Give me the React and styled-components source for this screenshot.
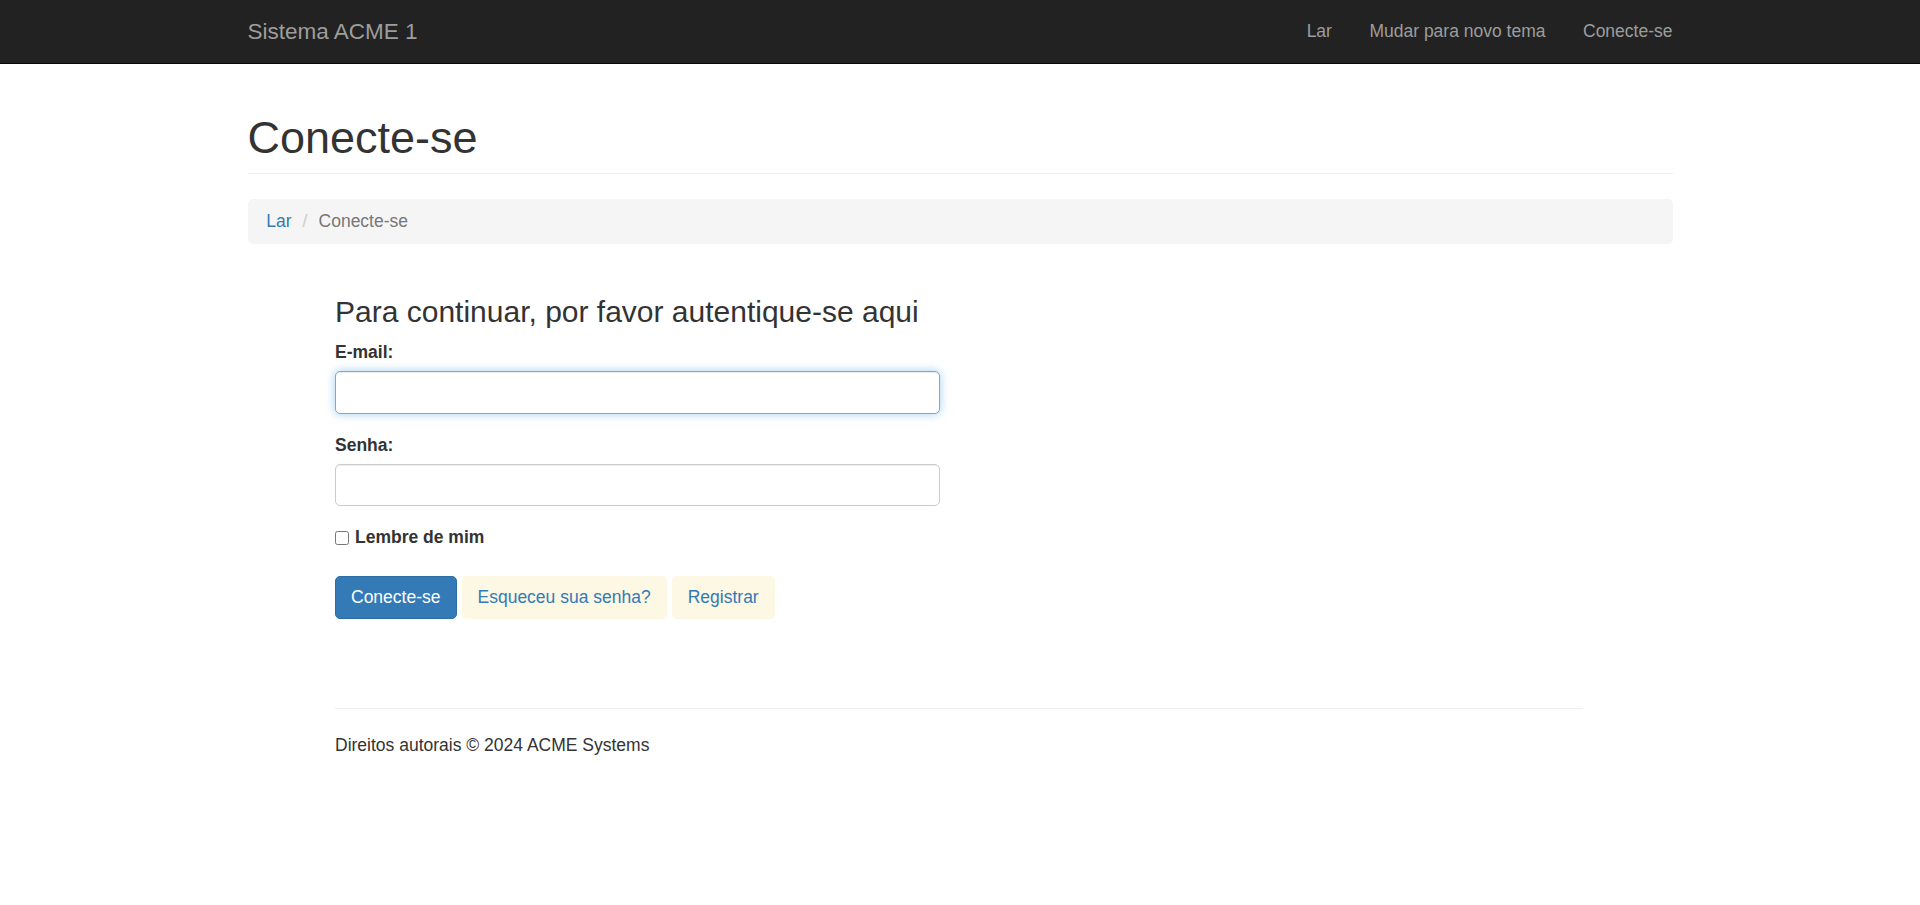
import React from 'react';
import styled, { createGlobalStyle } from 'styled-components';

// page is a bootstrap 3 layout seen at 125% scale, so the sizes below are bootstrap's x1.25
const GlobalStyle = createGlobalStyle`
  html, body {
    margin: 0;
    padding: 0;
    background: #fff;
  }
  body {
    font-family: "Liberation Sans", Arial, Helvetica, sans-serif;
    font-size: 17.5px;
    line-height: 1.42857;
    color: #333;
  }
  * {
    box-sizing: border-box;
  }
`;

const Navbar = styled.nav`
  background: #222;
  border-bottom: 1px solid #080808;
`;

const Container = styled.div`
  width: 1425px;
  margin: 0 auto;
`;

const NavInner = styled(Container)`
  display: flex;
  align-items: center;
  justify-content: space-between;
  height: 62.5px;
`;

const Brand = styled.a`
  font-size: 22.5px;
  line-height: 25px;
  color: #9d9d9d;
  text-decoration: none;
`;

const NavList = styled.ul`
  display: flex;
  list-style: none;
  margin: 0 -18.75px 0 0;
  padding: 0;
`;

const NavLink = styled.a`
  display: block;
  padding: 18.75px;
  line-height: 25px;
  color: #9d9d9d;
  text-decoration: none;
`;

const PageHeader = styled.div`
  margin-top: 49px;
  padding-bottom: 11px;
  border-bottom: 1px solid #eee;

  h1 {
    margin: 0;
    font-size: 45px;
    font-weight: 500;
    line-height: 1.1;
  }
`;

const Breadcrumb = styled.ol`
  display: flex;
  list-style: none;
  margin: 25px 0 0;
  padding: 10px 18.75px;
  line-height: 25px;
  background: #f5f5f5;
  border-radius: 5px;
`;

const Crumb = styled.li`
  color: ${(p) => (p.active ? '#777' : '#337ab7')};

  &:not(:first-child)::before {
    content: '/\\00a0';
    padding: 0 6.25px 0 11px;
    color: #ccc;
  }
`;

const Content = styled.div`
  margin-left: 87.5px;
  width: 1248px;
`;

const FormTitle = styled.h3`
  margin: 51px 0 12px;
  font-size: 30px;
  font-weight: 500;
  line-height: 1.1;
`;

const FormGroup = styled.div`
  margin-bottom: 18.75px;
`;

const Label = styled.label`
  display: block;
  font-weight: 700;
  margin-bottom: 6.25px;
  line-height: 25px;
`;

const Input = styled.input`
  display: block;
  width: 605px;
  height: 42.5px;
  padding: 7.5px 15px;
  font: inherit;
  color: #555;
  background: #fff;
  border: 1px solid ${(p) => (p.focused ? '#66afe9' : '#ccc')};
  border-radius: 5px;
  outline: none;
  box-shadow: ${(p) =>
    p.focused
      ? 'inset 0 1px 1px rgba(0,0,0,.075), 0 0 10px rgba(102,175,233,.6)'
      : 'inset 0 1px 1px rgba(0,0,0,.075)'};
`;

const CheckRow = styled.label`
  display: flex;
  align-items: center;
  gap: 6px;
  height: 25px;
  margin-top: 1px;
  font-weight: 700;

  input {
    width: 14px;
    height: 14px;
    margin: 0;
  }
`;

const ButtonRow = styled.div`
  display: flex;
  gap: 5px;
  margin-top: 26px;
`;

const Button = styled.button`
  height: 42.5px;
  padding: 0 15px;
  font: inherit;
  border-radius: 5px;
  border: 1px solid ${(p) => (p.primary ? '#2e6da4' : 'transparent')};
  background: ${(p) => (p.primary ? '#337ab7' : '#fcf8e3')};
  color: ${(p) => (p.primary ? '#fff' : '#337ab7')};
  cursor: pointer;
`;

const Rule = styled.hr`
  margin: 89px 0 0;
  border: 0;
  border-top: 1px solid #eee;
`;

const Footer = styled.footer`
  margin-top: 24.5px;
  line-height: 25px;
`;

const App = () => {
  return (
    <>
      <GlobalStyle />
      <Navbar>
        <NavInner>
          <Brand href="#">Sistema ACME 1</Brand>
          <NavList>
            <li><NavLink href="#">Lar</NavLink></li>
            <li><NavLink href="#">Mudar para novo tema</NavLink></li>
            <li><NavLink href="#">Conecte-se</NavLink></li>
          </NavList>
        </NavInner>
      </Navbar>

      <Container>
        <PageHeader>
          <h1>Conecte-se</h1>
        </PageHeader>
        <Breadcrumb>
          <Crumb>Lar</Crumb>
          <Crumb active>Conecte-se</Crumb>
        </Breadcrumb>

        <Content>
          <FormTitle>Para continuar, por favor autentique-se aqui</FormTitle>
          <FormGroup>
            <Label htmlFor="email">E-mail:</Label>
            <Input id="email" type="email" focused />
          </FormGroup>
          <FormGroup>
            <Label htmlFor="senha">Senha:</Label>
            <Input id="senha" type="password" />
          </FormGroup>
          <CheckRow>
            <input type="checkbox" />
            Lembre de mim
          </CheckRow>
          <ButtonRow>
            <Button primary>Conecte-se</Button>
            <Button>Esqueceu sua senha?</Button>
            <Button>Registrar</Button>
          </ButtonRow>

          <Rule />
          <Footer>Direitos autorais © 2024 ACME Systems</Footer>
        </Content>
      </Container>
    </>
  );
};

export default App;
